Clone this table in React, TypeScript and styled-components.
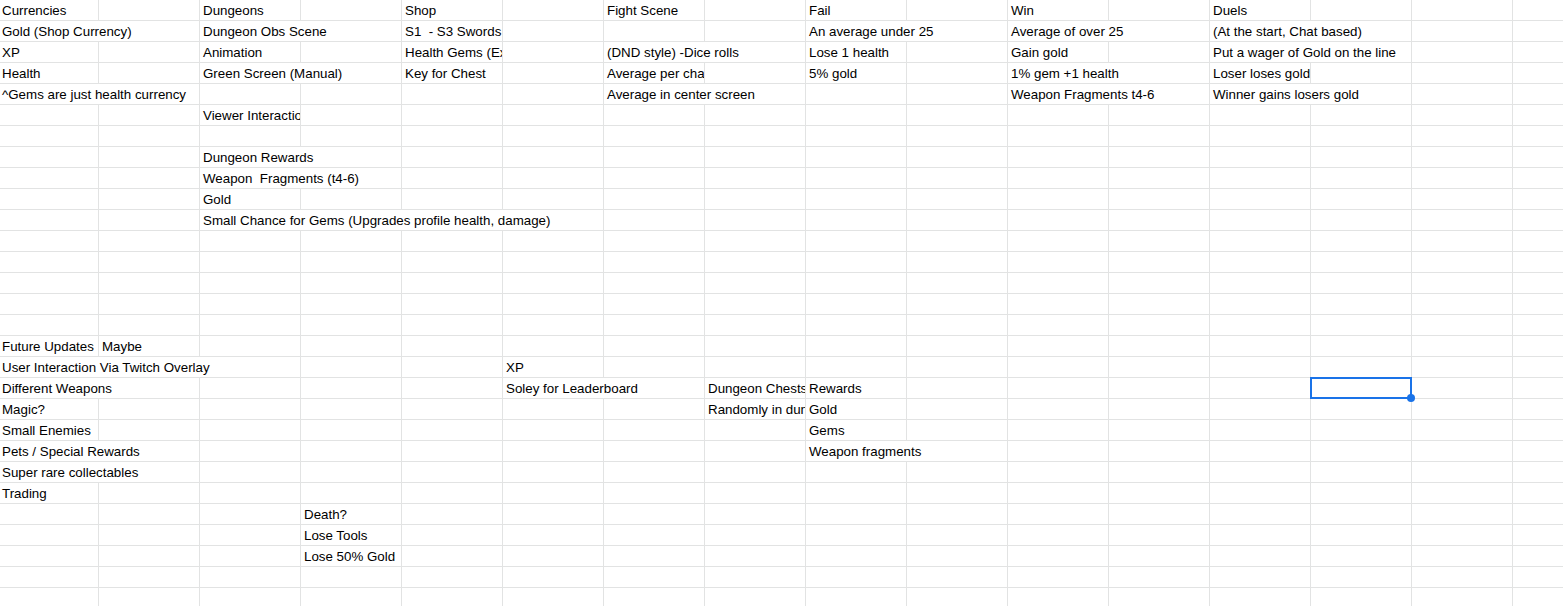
import React from "react";
import styled, { createGlobalStyle } from "styled-components";

const GlobalStyle = createGlobalStyle`
  html, body {
    margin: 0;
    padding: 0;
    background: #ffffff;
    overflow: hidden;
  }
  * { box-sizing: border-box; }
`;

const COLS = 16;
const ROWS = 29;

type CellData = { text: string; span?: number };
const data: Record<number, Record<number, CellData>> = {
  0: {
    0: { text: "Currencies" },
    2: { text: "Dungeons" },
    4: { text: "Shop" },
    6: { text: "Fight Scene" },
    8: { text: "Fail" },
    10: { text: "Win" },
    12: { text: "Duels" },
  },
  1: {
    0: { text: "Gold (Shop Currency)", span: 2 },
    2: { text: "Dungeon Obs Scene", span: 2 },
    4: { text: "S1  - S3 Swords" },
    8: { text: "An average under 25", span: 2 },
    10: { text: "Average of over 25", span: 2 },
    12: { text: "(At the start, Chat based)", span: 2 },
  },
  2: {
    0: { text: "XP" },
    2: { text: "Animation" },
    4: { text: "Health Gems (Extra)" },
    6: { text: "(DND style) -Dice rolls", span: 2 },
    8: { text: "Lose 1 health" },
    10: { text: "Gain gold" },
    12: { text: "Put a wager of Gold on the line", span: 2 },
  },
  3: {
    0: { text: "Health" },
    2: { text: "Green Screen (Manual)", span: 2 },
    4: { text: "Key for Chest" },
    6: { text: "Average per character" },
    8: { text: "5% gold" },
    10: { text: "1% gem +1 health", span: 2 },
    12: { text: "Loser loses gold" },
  },
  4: {
    0: { text: "^Gems are just health currency", span: 2 },
    6: { text: "Average in center screen", span: 2 },
    10: { text: "Weapon Fragments t4-6", span: 2 },
    12: { text: "Winner gains losers gold", span: 2 },
  },
  5: { 2: { text: "Viewer Interaction" } },
  7: { 2: { text: "Dungeon Rewards", span: 2 } },
  8: { 2: { text: "Weapon  Fragments (t4-6)", span: 2 } },
  9: { 2: { text: "Gold" } },
  10: { 2: { text: "Small Chance for Gems (Upgrades profile health, damage)", span: 4 } },
  16: { 0: { text: "Future Updates" }, 1: { text: "Maybe" } },
  17: { 0: { text: "User Interaction Via Twitch Overlay", span: 3 }, 5: { text: "XP" } },
  18: {
    0: { text: "Different Weapons", span: 2 },
    5: { text: "Soley for Leaderboard", span: 2 },
    7: { text: "Dungeon Chests" },
    8: { text: "Rewards" },
  },
  19: { 0: { text: "Magic?" }, 7: { text: "Randomly in dungeon" }, 8: { text: "Gold" } },
  20: { 0: { text: "Small Enemies" }, 8: { text: "Gems" } },
  21: { 0: { text: "Pets / Special Rewards", span: 2 }, 8: { text: "Weapon fragments", span: 2 } },
  22: { 0: { text: "Super rare collectables", span: 2 } },
  23: { 0: { text: "Trading" } },
  24: { 3: { text: "Death?" } },
  25: { 3: { text: "Lose Tools" } },
  26: { 3: { text: "Lose 50% Gold" } },
};

const SELECTED = { row: 18, col: 13 };

const Sheet = styled.div`
  display: grid;
  grid-template-columns: 99px repeat(${COLS - 1}, 101px);
  grid-auto-rows: 21px;
  width: max-content;
  font-family: "Liberation Sans", Arial, sans-serif;
  font-size: 13.333px;
  color: #000000;
`;

const Cell = styled.div<{ $span: number; $first?: boolean }>`
  grid-column: span ${(p) => p.$span};
  position: relative;
  border-right: 1px solid #e2e3e3;
  border-bottom: 1px solid #e2e3e3;
  padding: 1px 0 0 ${(p) => (p.$first ? 2 : 3)}px;
  line-height: 19px;
  white-space: pre;
  overflow: hidden;
`;

const SelectedCell = styled(Cell)`
  overflow: visible;
`;

const Selection = styled.div`
  position: absolute;
  left: -1px;
  top: -1px;
  width: 102px;
  height: 22px;
  border: 2px solid #1a73e8;
  pointer-events: none;
  z-index: 2;
`;

const Handle = styled.div`
  position: absolute;
  right: -5px;
  bottom: -5px;
  width: 8px;
  height: 8px;
  border-radius: 50%;
  background: #1a73e8;
  z-index: 3;
`;

function buildRow(r: number) {
  const row = data[r] || {};
  const cells: React.ReactNode[] = [];
  let c = 0;
  while (c < COLS) {
    const d = row[c];
    const span = d?.span ?? 1;
    const key = `${r}-${c}`;
    if (r === SELECTED.row && c === SELECTED.col) {
      cells.push(
        <SelectedCell key={key} $span={1}>
          <Selection>
            <Handle />
          </Selection>
        </SelectedCell>
      );
    } else {
      cells.push(
        <Cell key={key} $span={span} $first={c === 0}>
          {d ? d.text : ""}
        </Cell>
      );
    }
    c += span;
  }
  return cells;
}

export default function App() {
  const rows: React.ReactNode[] = [];
  for (let r = 0; r < ROWS; r++) rows.push(...buildRow(r));
  return (
    <>
      <GlobalStyle />
      <Sheet>{rows}</Sheet>
    </>
  );
}
